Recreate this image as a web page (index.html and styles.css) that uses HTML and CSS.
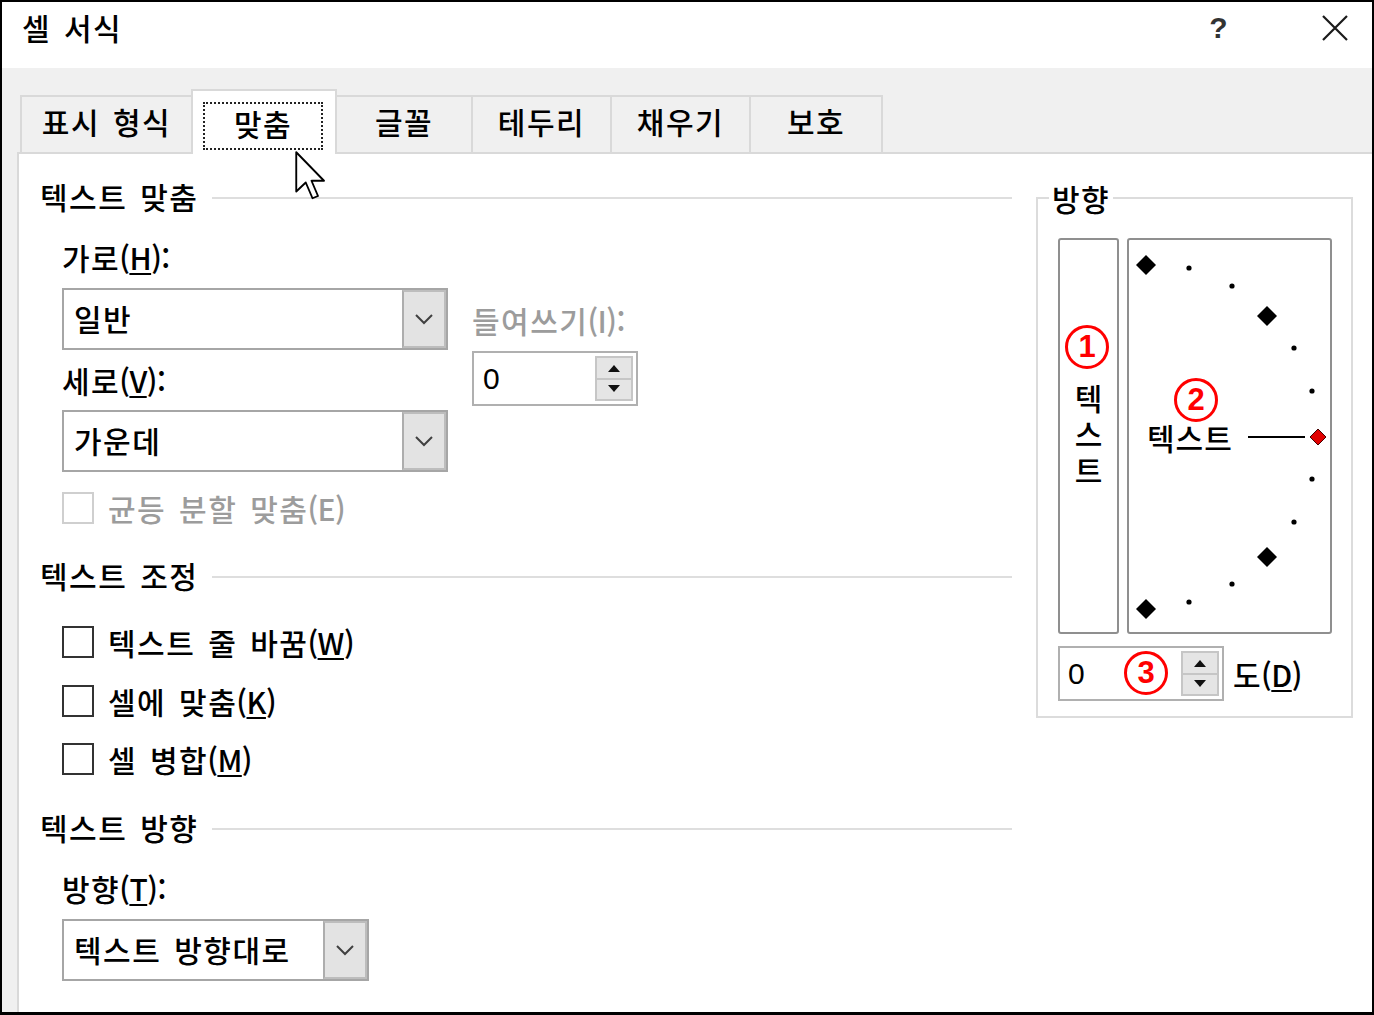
FILE: index.html
```html
<!DOCTYPE html>
<html lang="ko">
<head>
    <meta charset="UTF-8">
    <title>셀 서식</title>
    <link rel="stylesheet" href="styles.css">
</head>
<body>
    <div class="window">
        <div class="titlebar">
            <div class="title">셀 서식</div>
            <div class="title-buttons">
                <span class="help">?</span>
                <svg class="close" width="26" height="26" viewBox="0 0 26 26">
                    <path d="M1 1 L25 25 M25 1 L1 25" stroke="#1a1a1a" stroke-width="2.2" fill="none"/>
                </svg>
            </div>
        </div>

        <div class="client">
            <div class="tabs">
                <div class="tab">표시 형식</div>
                <div class="tab tab-active"><span class="focus">맞춤</span></div>
                <div class="tab">글꼴</div>
                <div class="tab">테두리</div>
                <div class="tab">채우기</div>
                <div class="tab tab-last">보호</div>
            </div>

            <div class="page">
                <div class="col-main">
                    <div class="section-head"><span>텍스트 맞춤</span></div>

                    <div class="align-row">
                        <div class="align-left">
                            <div class="label">가로<span class="key">(<u>H</u>)</span>:</div>
                            <div class="combo">
                                <span class="combo-value">일반</span>
                                <span class="combo-btn">
                                    <svg width="20" height="12" viewBox="0 0 20 12"><polyline points="2,2 10,10 18,2" fill="none" stroke="#404040" stroke-width="2"/></svg>
                                </span>
                            </div>
                            <div class="label label-gap">세로<span class="key">(<u>V</u>)</span>:</div>
                            <div class="combo combo-gap">
                                <span class="combo-value">가운데</span>
                                <span class="combo-btn">
                                    <svg width="20" height="12" viewBox="0 0 20 12"><polyline points="2,2 10,10 18,2" fill="none" stroke="#404040" stroke-width="2"/></svg>
                                </span>
                            </div>
                        </div>
                        <div class="align-indent">
                            <div class="label disabled">들여쓰기<span class="key">(I)</span>:</div>
                            <div class="spin">
                                <span class="spin-value">0</span>
                                <span class="spin-btns">
                                    <span class="spin-btn"><svg width="12" height="8" viewBox="0 0 12 8"><path d="M0 8 L6 1 L12 8 Z" fill="#111"/></svg></span>
                                    <span class="spin-btn"><svg width="12" height="8" viewBox="0 0 12 8"><path d="M0 0 L6 7 L12 0 Z" fill="#111"/></svg></span>
                                </span>
                            </div>
                        </div>
                    </div>

                    <div class="check check-justify disabled">
                        <span class="box"></span>
                        <span>균등 분할 맞춤<span class="key">(E)</span></span>
                    </div>

                    <div class="section-head head-control"><span>텍스트 조정</span></div>
                    <div class="check check-wrap"><span class="box"></span><span>텍스트 줄 바꿈<span class="key">(<u>W</u>)</span></span></div>
                    <div class="check check-shrink"><span class="box"></span><span>셀에 맞춤<span class="key">(<u>K</u>)</span></span></div>
                    <div class="check check-merge"><span class="box"></span><span>셀 병합<span class="key">(<u>M</u>)</span></span></div>

                    <div class="section-head head-direction"><span>텍스트 방향</span></div>
                    <div class="label label-direction">방향<span class="key">(<u>T</u>)</span>:</div>
                    <div class="combo combo-direction">
                        <span class="combo-value">텍스트 방향대로</span>
                        <span class="combo-btn">
                            <svg width="20" height="12" viewBox="0 0 20 12"><polyline points="2,2 10,10 18,2" fill="none" stroke="#404040" stroke-width="2"/></svg>
                        </span>
                    </div>
                </div>

                <fieldset class="orient">
                    <legend>방향</legend>
                    <div class="orient-boxes">
                        <div class="vbox">
                            <span class="mark mark-1">1</span>
                            <span class="vtext">텍스트</span>
                        </div>
                        <div class="dial">
                            <svg class="dial-svg" width="201" height="392" viewBox="0 0 201 392">
                                <g fill="#000">
                                    <path d="M17 15 L27 25 L17 35 L7 25 Z"/>
                                    <path d="M138 66 L148 76 L138 86 L128 76 Z"/>
                                    <path d="M138 307 L148 317 L138 327 L128 317 Z"/>
                                    <path d="M17 359 L27 369 L17 379 L7 369 Z"/>
                                    <circle cx="60" cy="28" r="2.6"/>
                                    <circle cx="103" cy="46" r="2.6"/>
                                    <circle cx="165" cy="108" r="2.6"/>
                                    <circle cx="183" cy="151" r="2.6"/>
                                    <circle cx="183" cy="239" r="2.6"/>
                                    <circle cx="165" cy="282" r="2.6"/>
                                    <circle cx="103" cy="344" r="2.6"/>
                                    <circle cx="60" cy="362" r="2.6"/>
                                </g>
                                <line x1="119" y1="197" x2="176" y2="197" stroke="#000" stroke-width="2"/>
                                <path d="M189 189 L197 197 L189 205 L181 197 Z" fill="#e00000" stroke="#400" stroke-width="1"/>
                            </svg>
                            <span class="dial-text">텍스트</span>
                            <span class="mark mark-2">2</span>
                        </div>
                    </div>
                    <div class="degree-row">
                        <div class="spin">
                            <span class="spin-value">0</span>
                            <span class="mark mark-3">3</span>
                            <span class="spin-btns">
                                <span class="spin-btn"><svg width="12" height="8" viewBox="0 0 12 8"><path d="M0 8 L6 1 L12 8 Z" fill="#111"/></svg></span>
                                <span class="spin-btn"><svg width="12" height="8" viewBox="0 0 12 8"><path d="M0 0 L6 7 L12 0 Z" fill="#111"/></svg></span>
                            </span>
                        </div>
                        <span class="degree-label">도<span class="key">(<u>D</u>)</span></span>
                    </div>
                </fieldset>
            </div>
        </div>

        <svg class="cursor" width="31" height="49" viewBox="0 0 12.4 19.6">
            <path d="M0.5 0.5 V16.2 L4.3 12.6 L7 18.9 L9.2 18 L6.6 11.9 H11.6 Z" fill="#fff" stroke="#000" stroke-width="0.75" stroke-linejoin="round"/>
        </svg>
    </div>
</body>
</html>
```

FILE: styles.css
```css
* {
    box-sizing: border-box;
}

body {
    margin: 0;
    background: #000;
    font-family: "Noto Sans CJK KR", "Noto Sans", sans-serif;
}

.window {
    position: relative;
    width: 1374px;
    height: 1015px;
    border: 2px solid #000;
    border-bottom-width: 3px;
    background: #f0f0f0;
    display: flex;
    flex-direction: column;
    font-size: 30px;
    font-weight: 500;
    letter-spacing: 1.5px;
    word-spacing: 3px;
    color: #000;
    overflow: hidden;
}

u {
    text-decoration-thickness: 2px;
    text-underline-offset: 3px;
}

/* mnemonic suffix, drawn tighter like the system font */
.key {
    letter-spacing: -0.5px;
    margin-left: -1px;
}

/* title bar */
.titlebar {
    height: 66px;
    flex: none;
    background: #fff;
    display: flex;
    align-items: center;
    justify-content: space-between;
    padding: 0 24px 16px 20px;
}

.title {
    line-height: 40px;
}

.title-buttons {
    display: flex;
    align-items: center;
    padding-top: 2px;
}

.help {
    font-family: "Liberation Sans", sans-serif;
    font-size: 30px;
    font-weight: bold;
    color: #333;
    margin-right: 93px;
}

/* tabs */
.client {
    flex: 1;
    display: flex;
    flex-direction: column;
}

.tabs {
    height: 84px;
    flex: none;
    display: grid;
    grid-template-columns: 171px 146px 134px 139px 139px 134px;
    align-items: end;
    padding-left: 18px;
}

.tab {
    height: 57px;
    border-top: 2px solid #d9d9d9;
    border-left: 2px solid #d9d9d9;
    display: flex;
    align-items: center;
    justify-content: center;
    line-height: 40px;
    padding-bottom: 7px;
}

.tab-last {
    border-right: 2px solid #d9d9d9;
}

.tab-active {
    position: relative;
    z-index: 1;
    height: 65px;
    margin-bottom: -2px;
    background: #fff;
    border: 2px solid #d9d9d9;
    border-bottom: none;
    padding: 6px 2px 0 0;
}

.tab-active + .tab {
    border-left: none;
}

.focus {
    width: 120px;
    height: 48px;
    border: 2px dotted #222;
    display: flex;
    align-items: center;
    justify-content: center;
    padding-bottom: 5px;
}

/* page */
.page {
    flex: 1;
    margin-left: 15px;
    background: #fff;
    border-top: 2px solid #d9d9d9;
    border-left: 2px solid #d9d9d9;
    display: flex;
    align-items: flex-start;
    padding: 22px 0 0 21px;
}

.col-main {
    width: 972px;
    flex: none;
}

.section-head {
    display: flex;
    align-items: center;
    gap: 14px;
    line-height: 40px;
}

.section-head::after {
    content: "";
    flex: 1;
    height: 2px;
    margin-top: 4px;
    background: #dedede;
}

.head-control {
    margin-top: 27px;
}

.head-direction {
    margin-top: 28px;
}

.label {
    line-height: 40px;
}

.disabled {
    color: #9c9c9c;
}

.align-row {
    display: flex;
    margin-top: 21px;
    padding-left: 22px;
}

.align-left {
    width: 386px;
}

.label-gap {
    margin-top: 10px;
}

.align-indent {
    margin-left: 24px;
    padding-top: 63px;
}

.align-indent .spin {
    margin-top: 11px;
}

/* combo boxes */
.combo {
    height: 62px;
    margin-top: 11px;
    border: 2px solid #a6a6a6;
    background: #fff;
    display: flex;
}

.combo-gap {
    margin-top: 10px;
}

.combo-value {
    flex: 1;
    padding-left: 10px;
    line-height: 56px;
}

.combo-btn {
    width: 44px;
    background: #e3e3e3;
    border: 2px solid #bdbdbd;
    border-left-color: #adadad;
    display: flex;
    align-items: center;
    justify-content: center;
}

.combo-direction {
    width: 307px;
    margin-left: 22px;
}

.label-direction {
    margin-top: 21px;
    padding-left: 22px;
}

/* spinners */
.spin {
    position: relative;
    width: 166px;
    height: 55px;
    border: 2px solid #b0b0b0;
    background: #fff;
    display: flex;
    align-items: center;
    padding: 3px;
}

.spin-value {
    flex: 1;
    padding-left: 6px;
    font-family: "Liberation Sans", sans-serif;
    font-weight: 400;
    font-size: 30px;
}

.spin-btns {
    width: 38px;
    height: 45px;
    display: flex;
    flex-direction: column;
}

.spin-btn {
    flex: 1;
    background: #e5e5e5;
    border: 2px solid #c6c6c6;
    display: flex;
    align-items: center;
    justify-content: center;
}

.spin-btn + .spin-btn {
    border-top: none;
}

/* check boxes */
.check {
    display: flex;
    align-items: center;
    gap: 14px;
    line-height: 40px;
    padding-left: 22px;
}

.check .box {
    width: 32px;
    height: 32px;
    border: 2px solid #333;
    background: #fff;
}

.check.disabled .box {
    border-color: #cfcfcf;
}

.check-justify {
    margin-top: 16px;
}

.check-wrap {
    margin-top: 27px;
}

.check-shrink {
    margin-top: 19px;
}

.check-merge {
    margin-top: 18px;
}

/* orientation group */
.orient {
    width: 317px;
    margin: 2px 0 0 24px;
    padding: 20px 19px 15px 20px;
    border: 2px solid #dcdcdc;
    min-width: 0;
}

.orient legend {
    line-height: 40px;
    padding: 0 3px;
    margin-left: -9px;
}

.orient-boxes {
    display: flex;
    gap: 8px;
}

.vbox,
.dial {
    position: relative;
    height: 396px;
    border: 2px solid #8f8f8f;
    border-radius: 3px;
}

.vbox {
    width: 61px;
    display: flex;
    justify-content: center;
}

.vtext {
    writing-mode: vertical-lr;
    text-orientation: upright;
    letter-spacing: 6px;
    margin-top: 144px;
    line-height: 30px;
    height: 120px;
}

.dial {
    width: 205px;
}

.dial-svg {
    position: absolute;
    left: 0;
    top: 0;
}

.dial-text {
    position: absolute;
    left: 18px;
    top: 177px;
    line-height: 40px;
    letter-spacing: 1px;
}

.degree-row {
    display: flex;
    align-items: center;
    gap: 9px;
    margin-top: 12px;
}

.degree-row .spin-value {
    padding-left: 5px;
}

/* red annotation circles */
.mark {
    position: absolute;
    width: 44px;
    height: 44px;
    border: 3px solid #f00;
    border-radius: 50%;
    color: #f00;
    font-family: "Liberation Sans", sans-serif;
    font-weight: bold;
    font-size: 31px;
    line-height: 38px;
    text-align: center;
    letter-spacing: 0;
    word-spacing: 0;
}

.mark-1 {
    left: 5px;
    top: 85px;
}

.mark-2 {
    left: 45px;
    top: 138px;
}

.mark-3 {
    left: 64px;
    top: 3px;
}

.cursor {
    position: absolute;
    left: 293px;
    top: 149px;
    z-index: 5;
}
```
